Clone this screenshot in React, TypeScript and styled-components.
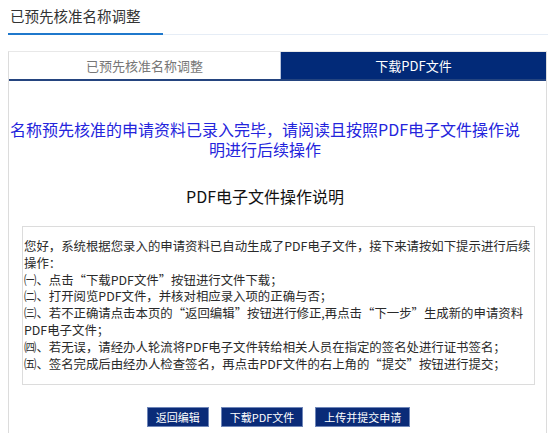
import React from "react";
import styled, { createGlobalStyle } from "styled-components";

const GlobalStyle = createGlobalStyle`
    html, body {
        margin: 0;
        padding: 0;
        background: #fff;
        overflow: hidden;
    }
    body {
        font-family: "Noto Sans CJK SC", "Noto Sans", sans-serif;
        color: #333;
    }
`;

// Styled Components
const PageWrapper = styled.div`
    width: 554px;
    height: 433px;
    overflow: hidden;
`;

const HeaderBar = styled.div`
    margin: 0 6px 0 8px;
    border-bottom: 1px solid #e6edf6;
    display: flex;
`;

const HeaderTitle = styled.h3`
    margin: 0 0 -1px 0;
    width: 155px;
    height: 35px;
    padding-left: 2px;
    box-sizing: border-box;
    line-height: 32px;
    font-size: 14.5px;
    font-weight: normal;
    color: #333;
    border-bottom: 2px solid #1f78cc;
    white-space: nowrap;
`;

const Panel = styled.div`
    margin: 16px 0 0 8px;
    width: 539px;
    height: 420px;
    box-sizing: border-box;
    border: 1px solid #dcdcdc;
    border-top-color: #e8e8e8;
`;

const Tabs = styled.div`
    display: grid;
    grid-template-columns: 271px 1fr;
    height: 29px;
    border-bottom: 2px solid #24447f;
    box-sizing: border-box;
`;

const Tab = styled.div<{ $active?: boolean }>`
    display: flex;
    align-items: center;
    justify-content: center;
    font-size: 13px;
    color: ${(p) => (p.$active ? "#fff" : "#777")};
    background: ${(p) => (p.$active ? "#022a78" : "#fff")};
    border-left: ${(p) => (p.$active ? "1px solid #b8c4dc" : "none")};
`;

const Notice = styled.div`
    margin: 38px 25px 0 0;
    text-align: center;
    font-size: 16px;
    line-height: 20px;
    color: #2424dc;
`;

const SubTitle = styled.h4`
    margin: 27px 25px 0 0;
    text-align: center;
    font-size: 16px;
    line-height: 20px;
    font-weight: normal;
    color: #111;
`;

const InfoBox = styled.div`
    margin: 20px 0 0 13px;
    width: 513px;
    height: 159px;
    box-sizing: border-box;
    border: 1px solid #dcdcdc;
    padding: 11px 2px 0 1px;
    font-size: 12.4px;
    line-height: 16.8px;
    color: #2a2a2a;
`;

const InfoLine = styled.div`
    white-space: nowrap;
`;

const Actions = styled.div`
    margin-top: 22px;
    display: flex;
    justify-content: center;
    gap: 12px;
    padding-left: 2px;
`;

const ActionButton = styled.button`
    height: 20px;
    padding: 0 8px;
    border: 1px solid #6f86b8;
    background: #0a2b78;
    color: #fff;
    font-family: "Noto Sans CJK SC", "Noto Sans", sans-serif;
    font-size: 11px;
    line-height: 18px;
    cursor: pointer;
`;

const infoLines = [
    "您好，系统根据您录入的申请资料已自动生成了PDF电子文件，接下来请按如下提示进行后续",
    "操作：",
    "㈠、点击“下载PDF文件”按钮进行文件下载；",
    "㈡、打开阅览PDF文件，并核对相应录入项的正确与否；",
    "㈢、若不正确请点击本页的“返回编辑”按钮进行修正,再点击“下一步”生成新的申请资料",
    "PDF电子文件；",
    "㈣、若无误，请经办人轮流将PDF电子文件转给相关人员在指定的签名处进行证书签名；",
    "㈤、签名完成后由经办人检查签名，再点击PDF文件的右上角的“提交”按钮进行提交；",
];

const App = () => {
    return (
        <PageWrapper>
            <GlobalStyle />
            <HeaderBar>
                <HeaderTitle>已预先核准名称调整</HeaderTitle>
            </HeaderBar>
            <Panel>
                <Tabs>
                    <Tab>已预先核准名称调整</Tab>
                    <Tab $active>下载PDF文件</Tab>
                </Tabs>
                <Notice>
                    名称预先核准的申请资料已录入完毕，请阅读且按照PDF电子文件操作说明进行后续操作
                </Notice>
                <SubTitle>PDF电子文件操作说明</SubTitle>
                <InfoBox>
                    {infoLines.map((line, i) => (
                        <InfoLine key={i}>{line}</InfoLine>
                    ))}
                </InfoBox>
                <Actions>
                    <ActionButton>返回编辑</ActionButton>
                    <ActionButton>下载PDF文件</ActionButton>
                    <ActionButton>上传并提交申请</ActionButton>
                </Actions>
            </Panel>
        </PageWrapper>
    );
};

export default App;
